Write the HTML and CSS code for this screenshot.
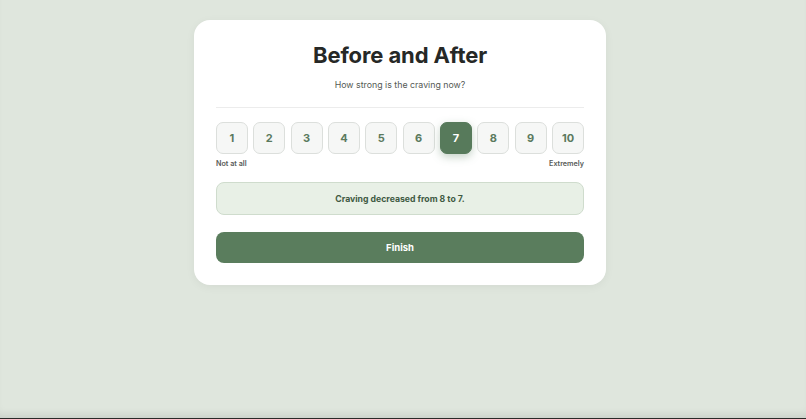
FILE: index.html
```html
<!DOCTYPE html>
<html>
<head>
<meta charset="utf-8">
<link rel="stylesheet" href="styles.css">
</head>
<body>
<main class="page">
  <section class="card">
    <h1 class="title">Before and After</h1>
    <p class="subtitle">How strong is the craving now?</p>
    <hr class="divider">
    <div class="scale">
      <button class="opt">1</button>
      <button class="opt">2</button>
      <button class="opt">3</button>
      <button class="opt">4</button>
      <button class="opt">5</button>
      <button class="opt">6</button>
      <button class="opt selected">7</button>
      <button class="opt">8</button>
      <button class="opt">9</button>
      <button class="opt">10</button>
    </div>
    <div class="labels"><span>Not at all</span><span>Extremely</span></div>
    <div class="message">Craving decreased from 8 to 7.</div>
    <button class="finish">Finish</button>
  </section>
</main>
</body>
</html>
```
FILE: styles.css
```css
html, body {
  margin: 0;
  padding: 0;
}
body {
  background: #dfe6dd;
  font-family: Inter, "Noto Sans", sans-serif;
  height: 419px;
  box-sizing: border-box;
  border-bottom: 1px solid #2a2a28;
  box-shadow: inset 0 -8px 10px -6px rgba(0,0,0,0.12);
}
.page {
  display: flex;
  justify-content: center;
  padding-top: 20px;
  padding-right: 6px;
}
.card {
  width: 412px;
  box-sizing: border-box;
  background: #fff;
  border-radius: 16px;
  padding: 20px 22px 22px;
  box-shadow: 0 2px 10px rgba(0,0,0,0.05);
}
.title {
  margin: 0;
  text-align: center;
  font-size: 22px;
  font-weight: 700;
  color: #262826;
  line-height: 30px;
  letter-spacing: -0.1px;
}
.subtitle {
  margin: 8px 0 0;
  text-align: center;
  font-size: 8.8px;
  color: #555a55;
  line-height: 14px;
}
.divider {
  border: none;
  border-top: 1px solid #ececec;
  margin: 15px 0 14px;
}
.scale {
  display: grid;
  grid-template-columns: repeat(10, 1fr);
  gap: 5.4px;
}
.opt {
  height: 32px;
  padding: 0;
  border: 1px solid #dcdfdc;
  border-radius: 7px;
  background: #f6f7f6;
  font-family: inherit;
  font-size: 11px;
  font-weight: 700;
  color: #5b7a5e;
}
.opt.selected {
  background: #577a5b;
  border-color: #577a5b;
  color: #fff;
  box-shadow: 0 3px 8px rgba(87,122,91,0.35);
}
.labels {
  display: flex;
  justify-content: space-between;
  margin-top: 5px;
  font-size: 7.2px;
  font-weight: 600;
  color: #585b58;
  line-height: 10px;
}
.message {
  margin-top: 13px;
  height: 33px;
  box-sizing: border-box;
  display: flex;
  align-items: center;
  justify-content: center;
  background: #e8f0e6;
  border: 1px solid #cfdccd;
  border-radius: 8px;
  font-size: 8.7px;
  font-weight: 700;
  color: #3f5a43;
}
.finish {
  display: block;
  width: 100%;
  margin-top: 17px;
  height: 31px;
  border: none;
  border-radius: 8px;
  background: #5a7d5d;
  color: #fff;
  font-family: inherit;
  font-size: 9.5px;
  font-weight: 700;
}
```
